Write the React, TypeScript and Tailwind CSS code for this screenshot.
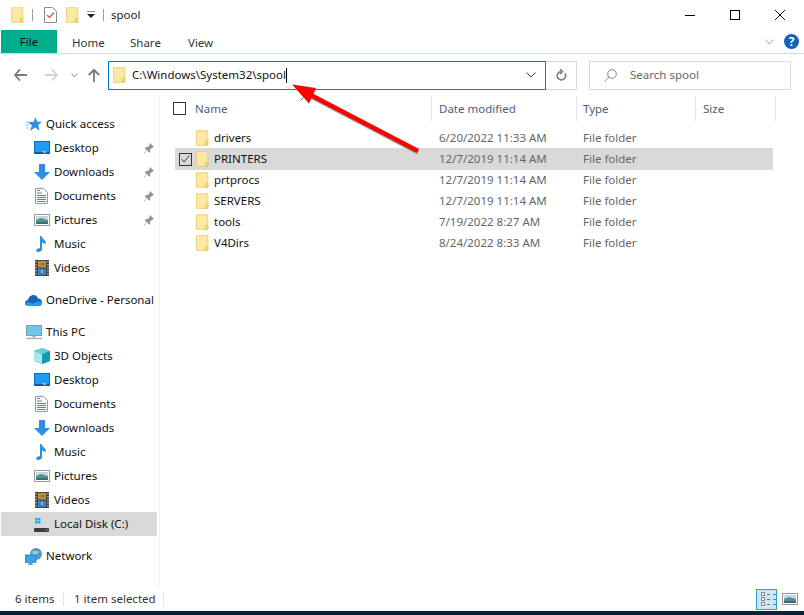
import React from "react";

const Folder = ({ s = 17, h = 20 }: { s?: number; h?: number }) => (
  <svg width={s} height={h} viewBox="0 0 17 20" className="shrink-0">
    <path d="M.5.5h15v19H.5z" fill="#fde9a4" stroke="#e8c65a" />
    <path d="M12 19.5v-5h3.500v5z" fill="#f6d774" stroke="#e8c65a" />
  </svg>
);

const Blue = "#2d8fe0";
const Desktop = () => (
  <svg width="16" height="14" viewBox="0 0 16 14">
    <rect x=".5" y=".5" width="15" height="12" fill="#1e9bf0" stroke="#1464b4" />
    <path d="M1 11h14v1.500H1z" fill="#0f5ea8" />
    <path d="M9 11h3" stroke="#fff" />
  </svg>
);
const Down = () => (
  <svg width="16" height="16" viewBox="0 0 16 16">
    <path d="M5 0h6v8h5l-8 8-8-8h5z" fill={Blue} />
  </svg>
);
const Doc = () => (
  <svg width="13" height="16" viewBox="0 0 13 16">
    <path d="M.5.5h8l4 4v11H.5z" fill="#fff" stroke="#999" />
    <path d="M5 2.500H2M2 5h5M2 7.500h9M2 9.500h9M2 11.500h9M2 13.500h9" stroke="#3a8ad0" />
  </svg>
);
const Pic = () => (
  <svg width="16" height="12" viewBox="0 0 16 12">
    <rect x=".5" y=".5" width="15" height="11" fill="#fff" stroke="#999" />
    <path d="M2 2h12v4H2z" fill="#b9d9ef" />
    <path d="M2 6l5-2 7 2v2H2z" fill="#5d8f7c" />
    <path d="M2 8h12v2H2z" fill="#2a6f8c" />
  </svg>
);
const Music = () => (
  <svg width="12" height="16" viewBox="0 0 12 16">
    <path d="M4 0h1.500c.5 3 5 4 4.500 8.500C9 7.500 7 6.500 6 6.500V13c0 2-2 3-4 3s-2.500-1.500-1.500-2.500S3 12 4 12.200z" fill={Blue} />
  </svg>
);
const Video = () => (
  <svg width="14" height="16" viewBox="0 0 14 16">
    <rect width="14" height="16" fill="#444" />
    <path d="M1 1v1.500M1 4v1.500M1 7v1.500M1 10v1.500M1 13v1.500M13 1v1.500M13 4v1.500M13 7v1.500M13 10v1.500M13 13v1.500" stroke="#ddd" />
    <rect x="3" y="1" width="8" height="6.500" fill="#c58a3a" />
    <rect x="3" y="8.500" width="8" height="6.500" fill="#2f7fd6" />
    <path d="M6 3h3v2H6z" fill="#4b8a3e" />
    <path d="M6 10h2v3H6z" fill="#d9a63c" />
  </svg>
);
const Star = () => (
  <svg width="17" height="15" viewBox="0 0 17 15">
    <path d="M10.500 0l1.700 4.800H17l-3.800 3.200 1.300 5.500-4.500-3-5 3.500 1.800-5.500L3 5h5.500z" fill={Blue} />
    <path d="M1 5h3M0 8h4M1 11h3" stroke="#8cc4ee" />
  </svg>
);
const Cloud = () => (
  <svg width="17" height="11" viewBox="0 0 17 11">
    <path d="M3.500 11C1 11 0 9.500 0 8s1-3 3-3c.5-2.500 2.500-5 5.500-5 2.300 0 3.800 1.300 4.500 3.500 2 0 4 1.500 4 4s-1.500 3.500-3 3.500z" fill="#1168b8" />
    <path d="M3.500 11C1 11 0 9.500 0 8.300c3-2 6-1 8 .7 3-3 6-3 9-1.500 0 2-1.500 3.500-3 3.500z" fill="#2a9be2" />
  </svg>
);
const PC = () => (
  <svg width="16" height="15" viewBox="0 0 16 15">
    <rect x=".5" y=".5" width="15" height="10" fill="#6ec6f0" stroke="#8a9aa5" />
    <path d="M6.500 11h3v1.500h-3z" fill="#9aa5ad" />
    <path d="M0 13.500h16" stroke="#aab2b8" strokeWidth="1.500" />
  </svg>
);
const Cube = () => (
  <svg width="16" height="16" viewBox="0 0 16 16">
    <path d="M8 0l8 3v10l-8 3-8-3V3z" fill="#2fb4cc" />
    <path d="M0 3l8 3v10l-8-3z" fill="#a9e6ee" />
    <path d="M8 6l8-3v10l-8 3z" fill="#1899b0" />
    <path d="M0 3l8-3 8 3-8 3z" fill="#63cfdf" />
  </svg>
);
const Disk = () => (
  <svg width="15" height="15" viewBox="0 0 15 15">
    <path d="M1 1h2.500v2.500H1zM4 1h2.500v2.500H4zM1 4h2.500v2.500H1zM4 4h2.500v2.500H4z" fill="#1ea7f2" />
    <path d="M2 8h11l2 3v4H0v-4z" fill="#d8d8d8" />
    <rect y="11" width="15" height="4" rx="1" fill="#3c3c3c" />
    <path d="M11.500 13h2" stroke="#7ddc4a" />
  </svg>
);
const Net = () => (
  <svg width="17" height="17" viewBox="0 0 17 17">
    <circle cx="11" cy="6" r="6" fill="#4d9bd8" />
    <path d="M7 3c2 1 5-1 7 1-1 2-3 2-4 4-1-1-3-2-3-5z" fill="#a8cfa0" />
    <rect x="0" y="7" width="11" height="7.500" fill="#37a4e6" stroke="#2b7fb8" strokeWidth=".8" />
    <path d="M4.500 14.500h2V16h-2zM2.500 16.500h6" stroke="#8fa3b0" />
  </svg>
);
const Pin = () => (
  <svg width="10" height="11" viewBox="0 0 10 11" className="shrink-0">
    <path d="M6 0l4 4-1 .7-.7-.2L6 6.700 6.200 9 5 9.600 3.200 7.500 .5 10.500 0 10l3-2.800L.8 5.200 1.500 4l2.300.2L5.700 1.800 5.500 1z" fill="#8f9498" />
  </svg>
);

const IconBox = ({ children }: { children: React.ReactNode }) => (
  <span className="w-[17px] h-[17px] flex items-center justify-center shrink-0">{children}</span>
);

const NavItem = ({
  icon,
  label,
  pin,
  top,
  selected,
}: {
  icon: React.ReactNode;
  label: string;
  pin?: boolean;
  top?: boolean;
  selected?: boolean;
}) => (
  <div className={`h-6 flex items-center ml-px w-[156px] ${selected ? "bg-[#d9d9d9]" : ""} ${top ? "pl-6" : "pl-8"}`}>
    <IconBox>{icon}</IconBox>
    <span className="ml-[4px] text-[#101010] whitespace-nowrap">{label}</span>
    {pin && (
      <span className="ml-auto mr-[3px]">
        <Pin />
      </span>
    )}
  </div>
);

const files = [
  ["drivers", "6/20/2022 11:33 AM"],
  ["PRINTERS", "12/7/2019 11:14 AM"],
  ["prtprocs", "12/7/2019 11:14 AM"],
  ["SERVERS", "12/7/2019 11:14 AM"],
  ["tools", "7/19/2022 8:27 AM"],
  ["V4Dirs", "8/24/2022 8:33 AM"],
];

export default function App() {
  return (
    <div className="relative w-[804px] h-[615px] overflow-hidden bg-white text-[11.5px] leading-none text-[#1a1a1a] flex flex-col font-['Noto_Sans','Open_Sans',sans-serif]">
      {/* title */}
      <div className="h-[30px] flex items-center shrink-0">
        <span className="ml-[11px]"><Folder s={13} h={16} /></span>
        <span className="ml-[8px] w-px h-[12px] bg-[#9a9a9a]" />
        <span className="ml-[11px]">
          <svg width="13" height="16" viewBox="0 0 13 16">
            <path d="M.5.5h8l4 4v11H.5z" fill="#fff" stroke="#8a8a8a" />
            <path d="M3 8l2.500 2.500L10 5.500" stroke="#e0602a" strokeWidth="1.300" fill="none" />
          </svg>
        </span>
        <span className="ml-[9px]"><Folder s={13} h={16} /></span>
        <span className="ml-[8px]">
          <svg width="8" height="8" viewBox="0 0 8 8">
            <path d="M0 0h8" stroke="#222" /><path d="M0 3h8L4 7z" fill="#222" />
          </svg>
        </span>
        <span className="ml-[8px] w-px h-[12px] bg-[#9a9a9a]" />
        <span className="ml-[7px] text-[#222]">spool</span>
        <div className="ml-auto flex items-center mr-[19px] gap-[35px]">
          <span className="w-[10px] h-px bg-black" />
          <span className="w-[10px] h-[10px] border border-black" />
          <svg width="10" height="10" viewBox="0 0 10 10"><path d="M0 0l10 10M10 0L0 10" stroke="#111" /></svg>
        </div>
      </div>

      {/* tabs */}
      <div className="h-[24px] flex items-stretch border-b border-[#dadada] shrink-0 pl-px">
        <div className="w-[56px] h-[23px] bg-[#00ae8d] text-[#111] flex items-center justify-center pt-px">File</div>
        <span className="ml-[15px] w-[58px] mt-[7px] text-[#333]">Home</span>
        <span className="w-[58px] mt-[7px] text-[#333]">Share</span>
        <span className="w-[58px] mt-[7px] text-[#333]">View</span>
        <div className="ml-auto flex items-center mr-[5px] gap-[10px]">
          <svg width="9" height="6" viewBox="0 0 9 6"><path d="M.5.5L4.500 5 8.500.5" stroke="#a8a8a8" fill="none" /></svg>
          <span className="w-[15px] h-[15px] rounded-full bg-[#1264b4] text-white flex items-center justify-center font-bold text-[12px]">?</span>
        </div>
      </div>

      {/* address row */}
      <div className="h-[42px] flex items-center shrink-0 pl-[14px]">
        <svg width="13" height="12" viewBox="0 0 13 12"><path d="M6 .5L1 6l5 5.500M1 6h12" stroke="#7a7a7a" strokeWidth="1.800" fill="none" /></svg>
        <svg className="ml-[18px]" width="13" height="12" viewBox="0 0 13 12"><path d="M7 .5L12 6l-5 5.500M12 6H0" stroke="#d2d2d2" strokeWidth="1.800" fill="none" /></svg>
        <svg className="ml-[13px]" width="7" height="5" viewBox="0 0 7 5"><path d="M.5.500L3.500 4 6.500.5" stroke="#8a8a8a" fill="none" /></svg>
        <svg className="ml-[10px]" width="12" height="13" viewBox="0 0 12 13"><path d="M.8 6L6 .8 11.200 6M6 1v12" stroke="#7a7a7a" strokeWidth="1.800" fill="none" /></svg>
        <div className="ml-[8px] w-[438px] h-[29px] border border-[#0078d7] flex items-center pl-[4px]">
          <Folder s={13} h={16} />
          <span className="ml-[6px] text-[#111] whitespace-nowrap">C:\Windows\System32\spool</span>
          <span className="w-px h-[15px] bg-black" />
          <svg className="ml-auto mr-[9px]" width="10" height="6" viewBox="0 0 10 6"><path d="M.5.500L5 5 9.500.5" stroke="#444" fill="none" /></svg>
        </div>
        <div className="w-[31px] h-[29px] border border-l-0 border-[#d9d9d9] flex items-center justify-center">
          <svg width="11" height="12" viewBox="0 0 11 12"><path d="M5 2.500a4.200 4.200 0 1 0 4 2M4 0l2.500 2.500L4 5" stroke="#777" strokeWidth="1.500" fill="none" /></svg>
        </div>
        <div className="ml-[12px] w-[202px] h-[29px] border border-[#d9d9d9] flex items-center pl-[14px] text-[#666]">
          <svg width="13" height="13" viewBox="0 0 13 13"><circle cx="8" cy="5" r="4.300" stroke="#888" fill="none" /><path d="M5 8l-4.500 4.500" stroke="#b08a70" /></svg>
          <span className="ml-[13px]">Search spool</span>
        </div>
      </div>

      {/* body */}
      <div className="flex-1 flex min-h-0">
        <nav className="w-[160px] border-r border-[#f0f0f0] pt-[16px] shrink-0">
          <NavItem top icon={<Star />} label="Quick access" />
          <NavItem icon={<Desktop />} label="Desktop" pin />
          <NavItem icon={<Down />} label="Downloads" pin />
          <NavItem icon={<Doc />} label="Documents" pin />
          <NavItem icon={<Pic />} label="Pictures" pin />
          <NavItem icon={<Music />} label="Music" />
          <NavItem icon={<Video />} label="Videos" />
          <div className="h-2" />
          <NavItem top icon={<Cloud />} label="OneDrive - Personal" />
          <div className="h-2" />
          <NavItem top icon={<PC />} label="This PC" />
          <NavItem icon={<Cube />} label="3D Objects" />
          <NavItem icon={<Desktop />} label="Desktop" />
          <NavItem icon={<Doc />} label="Documents" />
          <NavItem icon={<Down />} label="Downloads" />
          <NavItem icon={<Music />} label="Music" />
          <NavItem icon={<Pic />} label="Pictures" />
          <NavItem icon={<Video />} label="Videos" />
          <NavItem selected icon={<Disk />} label="Local Disk (C:)" />
          <div className="h-2" />
          <NavItem top icon={<Net />} label="Network" />
        </nav>
        <main className="flex-1 min-w-0">
          <div className="h-[25px] flex items-center text-[#4c607a]">
            <span className="ml-[13px] w-[13px] h-[13px] border border-[#333]" />
            <span className="relative ml-[9px] w-[237px] h-full flex items-center border-r border-[#e5e5e5]">
              Name
              <svg className="absolute left-[105px] top-0" width="8" height="5" viewBox="0 0 8 5"><path d="M.5 4.500L4 1l3.500 3.500" stroke="#777" fill="none" /></svg>
            </span>
            <span className="w-[145px] h-full flex items-center border-r border-[#e5e5e5] pl-[7px]">Date modified</span>
            <span className="w-[119px] h-full flex items-center border-r border-[#e5e5e5] pl-[6px]">Type</span>
            <span className="w-[80px] h-full flex items-center border-r border-[#e5e5e5] pl-[7px]">Size</span>
          </div>
          <div className="mt-[6px] ml-[15px] w-[598px]">
            {files.map(([n, d], i) => (
              <div key={n} className={`flex items-center ${i === 1 ? "h-[22px] -mb-px bg-[#d9d9d9]" : "h-[21px]"}`}>
                <span className="w-[21px] flex justify-start pl-[4px] shrink-0">
                  {i === 1 && (
                    <span className="w-[13px] h-[13px] border border-[#333] flex items-center justify-center">
                      <svg width="9" height="8" viewBox="0 0 9 8"><path d="M.5 4l2.500 3L8.500.5" stroke="#444" fill="none" /></svg>
                    </span>
                  )}
                </span>
                <Folder s={13} h={16} />
                <span className="ml-[5px] w-[225px] text-[#111]">{n}</span>
                <span className="w-[144px] text-[#666]">{d}</span>
                <span className="text-[#666]">File folder</span>
              </div>
            ))}
          </div>
        </main>
      </div>

      {/* status */}
      <div className="h-[24px] flex items-center shrink-0 text-[#333]">
        <span className="ml-[15px] w-[48px]">6 items</span>
        <span className="w-px h-[14px] bg-[#e5e5e5]" />
        <span className="ml-[10px] w-[89px]">1 item selected</span>
        <span className="w-px h-[14px] bg-[#e5e5e5]" />
        <div className="ml-auto mr-[5px] flex items-center gap-[5px]">
          <span className="w-[21px] h-[21px] bg-[#cce8f8] border border-[#26a0da] flex flex-col justify-center gap-[1px] pl-[4px]">
            {[0, 1, 2].map((i) => (
              <span key={i} className="flex items-center gap-[2px]">
                <span className="w-[4px] h-[4px] border border-[#888] bg-white" />
                <span className="w-[9px] h-px border-t border-dashed border-[#777]" />
              </span>
            ))}
          </span>
          <span className="mr-[1px]"><Pic /></span>
        </div>
      </div>
      <div className="h-[4px] bg-[#04233c] shrink-0" />

      {/* annotation arrow */}
      <svg className="absolute left-0 top-0 pointer-events-none" width="804" height="615" viewBox="0 0 804 615">
        <path d="M418 152L307 94" stroke="#999" strokeWidth="5" />
        <path d="M293 85L316 89L309 104z" fill="#999" />
        <path d="M418 151L305 92" stroke="#ff0000" strokeWidth="4.500" />
        <path d="M292 84.500L316 88L309 103z" fill="#ff0000" />
      </svg>
    </div>
  );
}
